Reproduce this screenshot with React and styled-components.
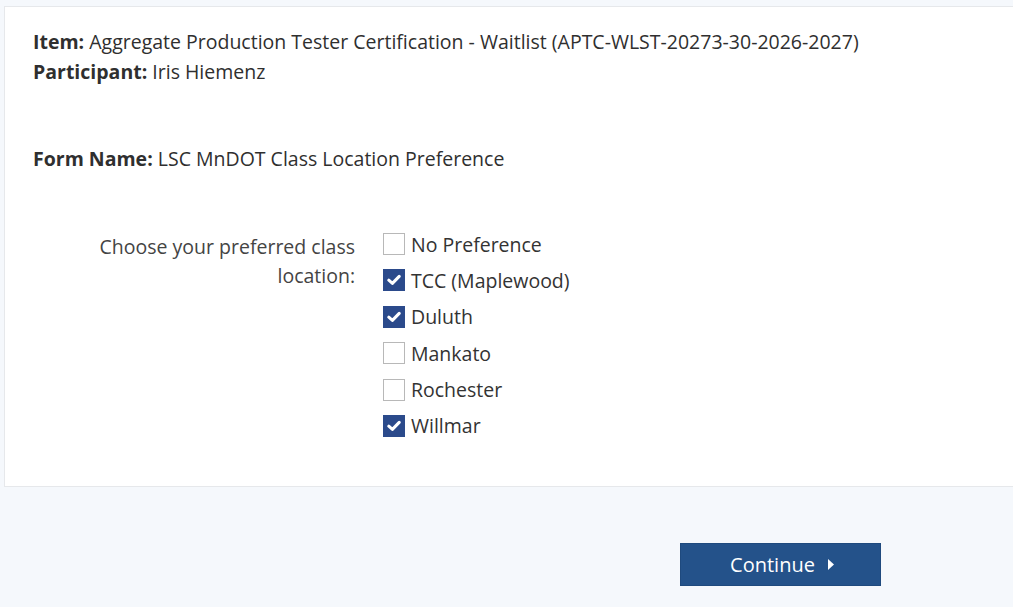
import React from "react";
import styled, { createGlobalStyle } from "styled-components";

const Global = createGlobalStyle`
  html, body { margin: 0; padding: 0; }
  body {
    background: #f5f8fc;
    font-family: "Open Sans", "Noto Sans", sans-serif;
    color: #333;
    overflow: hidden;
  }
`;

const Page = styled.div`
  width: 1013px;
  height: 607px;
  padding-top: 6px;
  box-sizing: border-box;
`;

const Card = styled.section`
  margin-left: 4px;
  margin-right: -4px;
  background: #fff;
  border: 1px solid #e6e8eb;
  padding: 20px 28px 47px 28px;
`;

const InfoLine = styled.div`
  font-size: 19.5px;
  line-height: 30px;
  color: #2f2f2f;
  white-space: nowrap;
  margin-top: ${(p) => p.$gap || 0}px;
`;

const Strong = styled.span`
  font-weight: 700;
`;

const FormGrid = styled.div`
  display: grid;
  grid-template-columns: 322px 1fr;
  column-gap: 28px;
  margin-top: 58px;
`;

const QuestionLabel = styled.div`
  text-align: right;
  font-size: 19.5px;
  line-height: 29px;
  color: #444;
  margin-top: 0;
  padding-left: 40px;
`;

const Options = styled.div`
  display: flex;
  flex-direction: column;
  gap: 10.4px;
  margin-top: -1px;
`;

const Option = styled.label`
  display: flex;
  align-items: center;
  gap: 6px;
  height: 26px;
  font-size: 19.5px;
  color: #333;
`;

const Box = styled.span`
  width: 22px;
  height: 22px;
  box-sizing: border-box;
  display: flex;
  align-items: center;
  justify-content: center;
  background: ${(p) => (p.$checked ? "#2b4a8b" : "#fff")};
  border: 1px solid ${(p) => (p.$checked ? "#2b4a8b" : "#b8b8b8")};
`;

const Footer = styled.div`
  display: flex;
  justify-content: flex-end;
  padding-right: 132px;
  margin-top: 56px;
`;

const Button = styled.button`
  width: 201px;
  height: 43px;
  background: #24528a;
  border: 1px solid #1f4a7e;
  color: #fff;
  font-family: "Open Sans", "Noto Sans", sans-serif;
  font-size: 20px;
  display: flex;
  align-items: center;
  justify-content: center;
  gap: 12px;
  padding: 0 0 0 4px;
  cursor: pointer;
`;

const Check = () => (
  <svg width="14" height="12" viewBox="0 0 14 12">
    <path d="M1.8 6.2 L5.4 9.4 L12.2 2.4" fill="none" stroke="#fff" strokeWidth="3" strokeLinecap="round" strokeLinejoin="round" />
  </svg>
);

const Caret = () => (
  <svg width="8" height="13" viewBox="0 0 8 13">
    <path d="M1 1 L7 6.5 L1 12 Z" fill="#fff" />
  </svg>
);

const options = [
  { label: "No Preference", checked: false },
  { label: "TCC (Maplewood)", checked: true },
  { label: "Duluth", checked: true },
  { label: "Mankato", checked: false },
  { label: "Rochester", checked: false },
  { label: "Willmar", checked: true },
];

export default function App() {
  return (
    <>
      <Global />
      <Page>
        <Card>
          <InfoLine>
            <Strong>Item:</Strong> Aggregate Production Tester Certification - Waitlist (APTC-WLST-20273-30-2026-2027)
          </InfoLine>
          <InfoLine>
            <Strong>Participant:</Strong> Iris Hiemenz
          </InfoLine>
          <InfoLine $gap={57}>
            <Strong>Form Name:</Strong> LSC MnDOT Class Location Preference
          </InfoLine>
          <FormGrid>
            <QuestionLabel>Choose your preferred class location:</QuestionLabel>
            <Options>
              {options.map((o) => (
                <Option key={o.label}>
                  <Box $checked={o.checked}>{o.checked && <Check />}</Box>
                  {o.label}
                </Option>
              ))}
            </Options>
          </FormGrid>
        </Card>
        <Footer>
          <Button>
            Continue <Caret />
          </Button>
        </Footer>
      </Page>
    </>
  );
}
